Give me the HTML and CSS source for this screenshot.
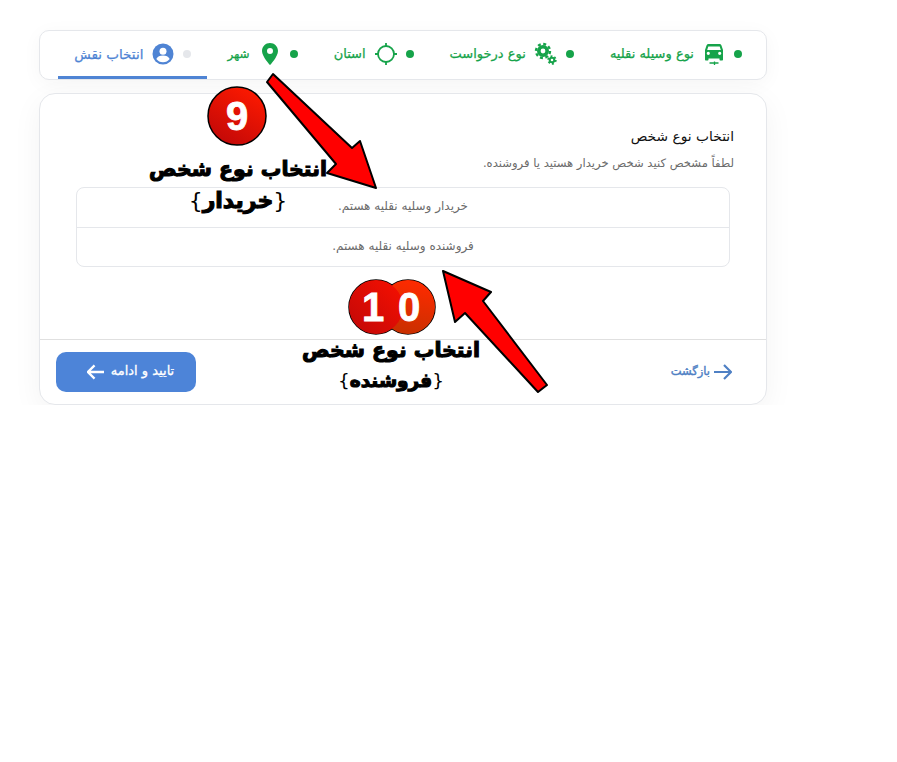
FILE: index.html
```html
<!DOCTYPE html>
<html lang="fa" dir="rtl">
<head>
  <meta charset="UTF-8">
  <title>انتخاب نقش</title>
  <link rel="stylesheet" href="styles.css">
</head>
<body>
  <div class="page">
    <!-- Steps -->
    <nav class="steps">
      <div class="step">
        <span class="dot"></span>
        <svg class="icon" viewBox="-3 -2 24 24">
          <path fill="#16a34a" fill-rule="evenodd" d="M3.500 0h11c1 0 1.700.6 2 1.500L18 6v9.500c0 .6-.4 1-1 1h-1.500c-.6 0-1-.4-1-1V14.500h-11v1c0 .6-.4 1-1 1H1c-.6 0-1-.4-1-1V6l1.500-4.500C1.800.6 2.500 0 3.500 0zM3.300 2.500 2.200 6h13.600l-1.100-3.500zM3.300 7.700a1.600 1.600 0 1 0 0 3.200 1.600 1.600 0 0 0 0-3.200zm11.400 0a1.600 1.600 0 1 0 0 3.200 1.600 1.600 0 0 0 0-3.200z"/>
          <path fill="none" stroke="#16a34a" stroke-width="1.300" d="M4.500 19h9M9.500 17.500v3.500"/>
        </svg>
        <span class="label">نوع وسیله نقلیه</span>
      </div>
      <div class="step">
        <span class="dot"></span>
        <svg class="icon" viewBox="-1 -1 24 24">
          <circle cx="8" cy="8" r="4.200" fill="none" stroke="#16a34a" stroke-width="3.600"/>
          <circle cx="8" cy="8" r="7" fill="none" stroke="#16a34a" stroke-width="2.400" stroke-dasharray="3 2.500"/>
          <circle cx="17" cy="17" r="2.300" fill="none" stroke="#16a34a" stroke-width="2"/>
          <circle cx="17" cy="17" r="3.900" fill="none" stroke="#16a34a" stroke-width="1.600" stroke-dasharray="2 2.080"/>
        </svg>
        <span class="label">نوع درخواست</span>
      </div>
      <div class="step">
        <span class="dot"></span>
        <svg class="icon" viewBox="-1 -1 24 24">
          <circle cx="11" cy="11" r="8" fill="none" stroke="#16a34a" stroke-width="1.800"/>
          <path fill="none" stroke="#16a34a" stroke-width="1.800" d="M11 0v3.500M11 18.500V22M0 11h3.500M18.500 11H22"/>
        </svg>
        <span class="label">استان</span>
      </div>
      <div class="step step-city">
        <span class="dot"></span>
        <svg class="icon" viewBox="-4 -1 24 24">
          <path fill="#16a34a" fill-rule="evenodd" d="M8 0C3.600 0 0 3.500 0 7.900 0 13.500 8 22 8 22s8-8.500 8-14.100C16 3.500 12.400 0 8 0zm0 5a3 3 0 1 1 0 6 3 3 0 0 1 0-6z"/>
        </svg>
        <span class="label">شهر</span>
      </div>
      <div class="step active">
        <span class="dot"></span>
        <svg class="icon" viewBox="-1.500 -1.500 24 24">
          <circle cx="10.500" cy="10.500" r="10.500" fill="#4f84d4"/>
          <circle cx="10.500" cy="7.800" r="3.500" fill="#fff"/>
          <path fill="#fff" d="M3.800 15.500c1-2.300 3.800-3.400 6.700-3.400s5.700 1.100 6.700 3.400c-1.500 2-4 3.300-6.700 3.300s-5.200-1.300-6.700-3.300z"/>
        </svg>
        <span class="label">انتخاب نقش</span>
      </div>
    </nav>

    <!-- Role card -->
    <section class="card">
      <div class="card-body">
        <h2 class="title">انتخاب نوع شخص</h2>
        <p class="hint">لطفاً مشخص کنید شخص خریدار هستید یا فروشنده.</p>
        <ul class="roles">
          <li>خریدار وسلیه نقلیه هستم.</li>
          <li>فروشنده وسلیه نقلیه هستم.</li>
        </ul>
      </div>
      <div class="card-footer">
        <a class="back">
          <svg viewBox="0 0 18 16" width="18" height="16">
            <path fill="none" stroke="#4f80c4" stroke-width="2.200" d="M0 8h16.500M10 1l7 7-7 7"/>
          </svg>
          <span class="btn-text">بازگشت</span>
        </a>
        <button class="next">
          <span class="btn-text">تایید و ادامه</span>
          <svg viewBox="0 0 18 16" width="17" height="16">
            <path fill="none" stroke="#fff" stroke-width="2.400" d="M18 8H1.500M8 1 1 8l7 7"/>
          </svg>
        </button>
      </div>
    </section>
  </div>

  <!-- Annotations drawn over the page -->
  <svg class="arrows" viewBox="0 0 897 762" width="897" height="762">
    <defs>
      <linearGradient id="badge" x1="0.800" y1="0" x2="0.200" y2="1">
        <stop offset="0" stop-color="#ff1a00"/>
        <stop offset="1" stop-color="#c00808"/>
      </linearGradient>
      <linearGradient id="badge-left" x1="1" y1="0" x2="0" y2="1">
        <stop offset="0" stop-color="#f81000"/>
        <stop offset="1" stop-color="#c00808"/>
      </linearGradient>
      <linearGradient id="badge-right" x1="0.600" y1="0" x2="0.400" y2="1">
        <stop offset="0" stop-color="#ff2a00"/>
        <stop offset="1" stop-color="#c83000"/>
      </linearGradient>
    </defs>
    <polygon class="arrow" points="273,74 352,148 360,141 376,188 327,173 336,164 267,82"/>
    <polygon class="arrow" points="443,271 491,292 483,301 547,385 538,392 465,313 455,322"/>
    <circle class="ball" cx="237" cy="116" r="29"/>
    <!-- the pair is outlined first so no line shows in the overlap -->
    <circle class="ball-line" cx="376" cy="307" r="27"/>
    <circle class="ball-line" cx="408" cy="307" r="27"/>
    <circle class="ball-right" cx="408" cy="307" r="27"/>
    <circle class="ball-left" cx="376" cy="307" r="27"/>
  </svg>
  <span class="num num-nine">9</span>
  <span class="num num-one">1</span>
  <span class="num num-zero">0</span>
  <div class="note note-buyer">انتخاب نوع شخص<br><span class="role-name"><i>{</i>خریدار<i>}</i></span></div>
  <div class="note note-seller">انتخاب نوع شخص<br><span class="role-name"><i>{</i>فروشنده<i>}</i></span></div>
</body>
</html>
```

FILE: styles.css
```css
* {
  box-sizing: border-box;
}

body {
  margin: 0;
  background-color: #fff;
  font-family: "DejaVu Sans", sans-serif;
  color: #111;
}

.page {
  padding: 30px 130px 0 39px;
}

.steps {
  display: flex;
  height: 50px;
  padding: 0 8px;
  gap: 4px;
  background-color: #fff;
  border: 1px solid #e5e7eb;
  border-radius: 10px;
  box-shadow: 0 4px 20px rgba(0, 0, 0, 0.04);
}

.step {
  display: flex;
  align-items: center;
  gap: 8px;
  padding: 0 16px;
  color: #16a34a;
  font-size: 13px;
  white-space: nowrap;
  -webkit-text-stroke: 0.25px currentColor;
  border-bottom: 3px solid transparent;
}

.step-city {
  font-size: 12px;
}

.step.active {
  color: #4f84d4;
  font-size: 13.500px;
  border-bottom-color: #4f84d4;
}

.dot {
  width: 8px;
  height: 8px;
  border-radius: 50%;
  background-color: #16a34a;
}

.active .dot {
  background-color: #e5e7eb;
}

.icon {
  width: 24px;
  height: 24px;
}

.card {
  margin-top: 13px;
  background-color: #fff;
  border: 1px solid #e5e7eb;
  border-radius: 16px;
  box-shadow: 0 8px 30px rgba(0, 0, 0, 0.05);
}

.card-body {
  height: 245px;
  padding: 33px 32px 0;
}

.title {
  margin: 0;
  font-size: 13.800px;
  font-weight: normal;
  line-height: 18px;
}

.hint {
  margin: 10px 0 0;
  font-size: 11.600px;
  line-height: 16px;
  color: #6b6b6b;
}

.roles {
  list-style: none;
  margin: 16px 4px 0 4px;
  padding: 0;
  border: 1px solid #e5e7eb;
  border-radius: 8px;
}

.roles li {
  height: 39px;
  line-height: 36px;
  text-align: center;
  font-size: 12px;
  color: #6b6b6b;
}

.roles li + li {
  border-top: 1px solid #e5e7eb;
}

.card-footer {
  display: flex;
  justify-content: space-between;
  align-items: center;
  height: 65px;
  padding: 0 16px;
  border-top: 1px solid #e0e0e0;
}

.btn-text {
  margin-bottom: 3px;
}

.back {
  display: flex;
  align-items: center;
  gap: 4px;
  margin-right: 18px;
  color: #4f80c4;
  font-size: 11.500px;
  -webkit-text-stroke: 0.4px currentColor;
}

.next {
  display: flex;
  align-items: center;
  justify-content: center;
  gap: 7px;
  width: 140px;
  height: 40px;
  padding: 0 0 0 9px;
  border: none;
  border-radius: 10px;
  background-color: #4d84d8;
  color: #fff;
  font-family: inherit;
  font-size: 13px;
  -webkit-text-stroke: 0.3px currentColor;
}

.arrows {
  position: absolute;
  top: 0;
  left: 0;
}

.arrow {
  fill: #ff0000;
  stroke: #000;
  stroke-width: 2;
  stroke-linejoin: round;
}

.ball {
  fill: url(#badge);
  stroke: #000;
  stroke-width: 1.500;
}

.ball-line {
  fill: none;
  stroke: #000;
  stroke-width: 1.500;
}

.ball-left {
  fill: url(#badge-left);
}

.ball-right {
  fill: url(#badge-right);
}

.num {
  position: absolute;
  color: #fff;
  font-family: "Liberation Sans", sans-serif;
  font-weight: bold;
  font-size: 40px;
  line-height: 40px;
  -webkit-text-stroke: 0.8px #fff;
}

.num-nine {
  left: 226px;
  top: 96px;
}

.num-one {
  left: 362px;
  top: 287px;
}

.num-zero {
  left: 398px;
  top: 287px;
}

.note {
  position: absolute;
  width: 240px;
  text-align: center;
  color: #000;
  font-size: 20.500px;
  font-weight: bold;
  -webkit-text-stroke: 1.100px #000;
}

.note i {
  font-style: normal;
  font-weight: normal;
  -webkit-text-stroke: 0;
}

.note-buyer {
  left: 118px;
  top: 153px;
  line-height: 32px;
}

.note-buyer .role-name {
  font-size: 22px;
}

.note-seller {
  left: 271px;
  top: 335px;
  line-height: 30px;
}

.note-seller .role-name {
  font-size: 18.500px;
}
```
